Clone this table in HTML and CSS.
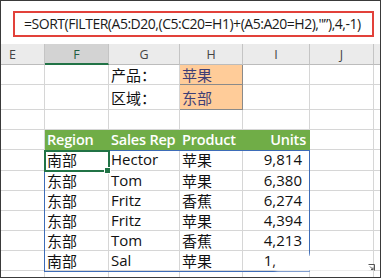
FILE: index.html
```html
<!DOCTYPE html>
<html>
<head>
<meta charset="utf-8">
<link rel="stylesheet" href="styles.css">
</head>
<body>
<div class="frame">
  <div class="formula-area">
    <div class="formula-box">=SORT(FILTER(A5:D20,(C5:C20=H1)+(A5:A20=H2),"”),4,-1)</div>
  </div>
  <div class="sheet">
    <div class="ch ch-first">E</div>
    <div class="ch ch-sel">F</div>
    <div class="ch">G</div>
    <div class="ch">H</div>
    <div class="ch">I</div>
    <div class="ch">J</div>
    <div class="ch ch-last"></div>

    <div class="c"></div><div class="c"></div><div class="c cjk">产品：</div><div class="c inp cjk">苹果</div><div class="c"></div><div class="c"></div><div class="c last"></div>
    <div class="c r2"></div><div class="c r2"></div><div class="c r2 cjk">区域：</div><div class="c r2 inp cjk">东部</div><div class="c r2"></div><div class="c r2"></div><div class="c r2 last"></div>
    <div class="c"></div><div class="c"></div><div class="c"></div><div class="c"></div><div class="c"></div><div class="c"></div><div class="c last"></div>

    <div class="c"></div><div class="c hd">Region</div><div class="c hd">Sales Rep</div><div class="c hd">Product</div><div class="c hd num">Units</div><div class="c"></div><div class="c last"></div>

    <div class="c"></div><div class="c cjk">南部</div><div class="c">Hector</div><div class="c cjk">苹果</div><div class="c num">9,814</div><div class="c"></div><div class="c last"></div>
    <div class="c"></div><div class="c cjk">东部</div><div class="c">Tom</div><div class="c cjk">苹果</div><div class="c num">6,380</div><div class="c"></div><div class="c last"></div>
    <div class="c"></div><div class="c cjk">东部</div><div class="c">Fritz</div><div class="c cjk">香蕉</div><div class="c num">6,274</div><div class="c"></div><div class="c last"></div>
    <div class="c"></div><div class="c cjk">东部</div><div class="c">Fritz</div><div class="c cjk">苹果</div><div class="c num">4,394</div><div class="c"></div><div class="c last"></div>
    <div class="c"></div><div class="c cjk">东部</div><div class="c">Tom</div><div class="c cjk">香蕉</div><div class="c num">4,213</div><div class="c"></div><div class="c last"></div>
    <div class="c"></div><div class="c cjk">南部</div><div class="c">Sal</div><div class="c cjk">苹果</div><div class="c num">1,197</div><div class="c"></div><div class="c last"></div>
    <div class="c"></div><div class="c"></div><div class="c"></div><div class="c"></div><div class="c"></div><div class="c"></div><div class="c last"></div>

    <div class="spill"></div>
    <div class="active"><span class="handle"></span></div>
    <div class="fog"></div>
    <svg class="qa" width="8" height="8" viewBox="0 0 8 8"><path d="M0.5 1.5H6.5V7.5M2 3.5L5 6.5M3 6.5H5V4.5" fill="none" stroke="#555" stroke-width="1"/></svg>
  </div>
</div>
</body>
</html>
```

FILE: styles.css
```css
html, body {
  margin: 0;
  padding: 0;
  background: #ffffff;
}
.frame {
  width: 381px;
  height: 278px;
  box-sizing: border-box;
  border: 1px solid #3a3a3a;
  overflow: hidden;
  background: #ffffff;
  font-family: "Open Sans", "Noto Sans CJK SC", sans-serif;
}
.formula-area {
  height: 43px;
  box-sizing: border-box;
  padding: 10px 0 0 12px;
  background: #ffffff;
}
.formula-box {
  width: 361px;
  height: 26px;
  box-sizing: border-box;
  border: 2px solid #e2413a;
  padding-left: 9px;
  font-size: 14px;
  letter-spacing: -0.48px;
  line-height: 21px;
  color: #1a1a1a;
  white-space: nowrap;
  overflow: hidden;
}
.sheet {
  position: relative;
  display: grid;
  grid-template-columns: 44px 64px 71px 63px 67px 64px 1fr;
  grid-template-rows: 21px 20px 25px 20px 20px 21px 20px 20px 20px 20px 20px 20px;
}
.ch {
  background: #ebebeb;
  border-right: 1px solid #c4c4c4;
  border-bottom: 1px solid #bcbcbc;
  box-sizing: border-box;
  font-family: "Open Sans", sans-serif;
  font-size: 12.5px;
  color: #444;
  text-align: center;
  line-height: 22px;
}
.ch-first {
  text-align: right;
  padding-right: 28px;
}
.ch-sel {
  background: #d3d3d3;
  color: #1f5f42;
  border-bottom: 2px solid #217346;
}
.ch-last {
  border-right: none;
}
.c {
  box-sizing: border-box;
  border-right: 1px solid #d6d6d6;
  border-bottom: 1px solid #d6d6d6;
  font-size: 15px;
  line-height: 19px;
  padding-left: 2px;
  color: #111;
  white-space: nowrap;
  overflow: hidden;
}
.c.last {
  border-right: none;
}
.cjk {
  font-family: "Noto Sans CJK SC", sans-serif;
  font-size: 15px;
  line-height: 19px;
}
.r2 {
  line-height: 26px;
}
.inp {
  background: #ffcc99;
  color: #3f3f76;
  border-right: 1px solid #8a8a8a;
  border-bottom: 1px solid #8a8a8a;
}
.hd {
  background: #70ad47;
  color: #ffffff;
  font-weight: 600;
  font-size: 14.5px;
  letter-spacing: -0.2px;
  border-right-color: #70ad47;
  border-bottom-color: #70ad47;
}
.num {
  text-align: right;
  padding-right: 7px;
}
.hd.num {
  padding-right: 3px;
}
.spill {
  position: absolute;
  left: 43px;
  top: 106px;
  width: 266px;
  height: 122px;
  border: 1px solid #3d6cb8;
  box-sizing: border-box;
  pointer-events: none;
}
.active {
  position: absolute;
  left: 43px;
  top: 106px;
  width: 66px;
  height: 22px;
  border: 2px solid #217346;
  box-sizing: border-box;
}
.handle {
  position: absolute;
  right: -3px;
  bottom: -4px;
  width: 5px;
  height: 5px;
  background: #217346;
  border: 1px solid #ffffff;
}
.fog {
  position: absolute;
  left: 276px;
  top: 212px;
  width: 92px;
  height: 14px;
  background: #ffffff;
  box-shadow: 0 0 3px 1px rgba(255,255,255,0.9);
}
.qa {
  position: absolute;
  left: 367px;
  top: 219px;
}
```
